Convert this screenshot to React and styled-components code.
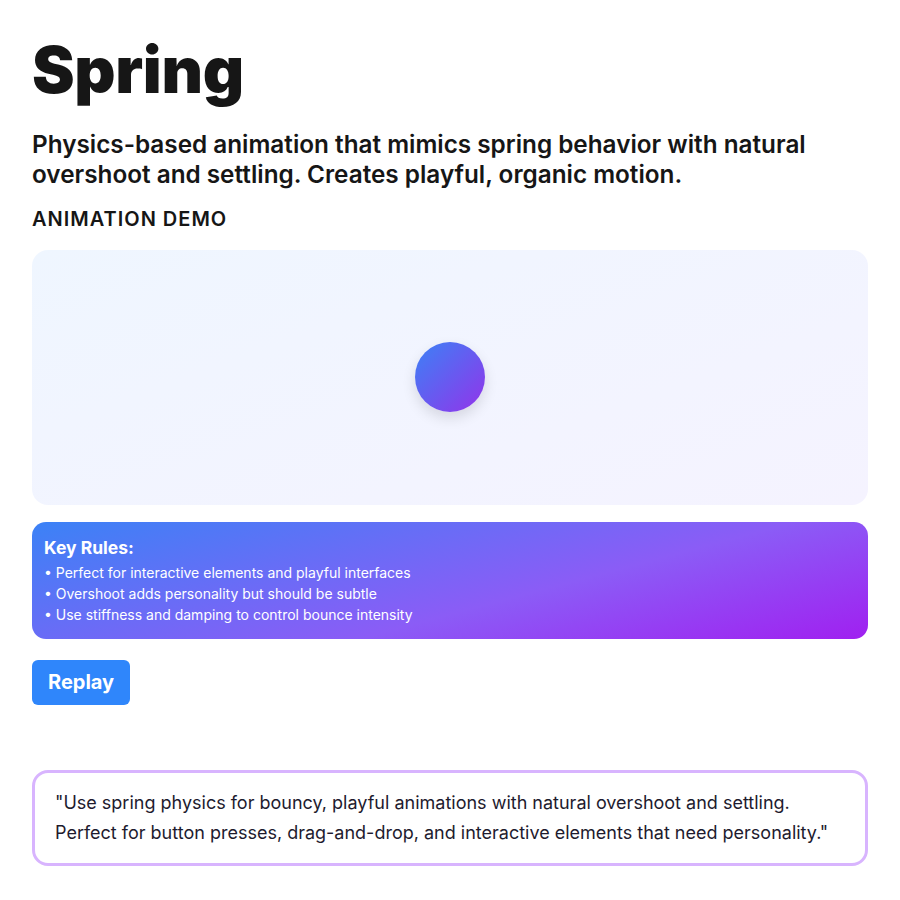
import React from 'react'
import styled, { createGlobalStyle } from 'styled-components';

const Global = createGlobalStyle`
body{
  margin:0;
  background:#fff;
  font-family:Inter, "Noto Sans", sans-serif;
  color:#111;
}
`;

const Page = styled.div`
padding:32px 32px;
display:flex;
flex-direction:column;
`;

const Title = styled.h1`
margin:0;
font-size:64px;
font-weight:900;
line-height:1.2;
letter-spacing:-0.3px;
color:#161616;
`;

const Lead = styled.p`
margin:20px 0 0;
font-size:24.3px;
font-weight:600;
line-height:30px;
color:#161616;
`;

const Label = styled.h3`
margin:18px 0 0;
font-size:20px;
font-weight:600;
line-height:24px;
letter-spacing:1px;
text-transform:uppercase;
color:#161616;
`;

const Stage = styled.div`
margin-top:19px;
height:255px;
border-radius:16px;
background:linear-gradient(160deg, #eff6ff 0%, #f5f3ff 100%);
display:flex;
align-items:center;
justify-content:center;
`;

const Ball = styled.div`
width:70px;
height:70px;
border-radius:50%;
background:linear-gradient(135deg, #3b82f6 0%, #9333ea 100%);
box-shadow:0 6px 14px rgba(0,0,0,0.12);
`;

const Rules = styled.div`
margin-top:17px;
padding:15px 12px 14px;
border-radius:14px;
color:#fff;
background:linear-gradient(165deg, #3b82f6 0%, #8b5cf6 60%, #a020f0 100%);
`;

const RulesTitle = styled.div`
font-size:17.5px;
font-weight:700;
line-height:22px;
margin-bottom:3px;
`;

const List = styled.ul`
margin:0;
padding:0;
list-style:none;
`;

const Item = styled.li`
font-size:14px;
line-height:21px;
&:before{
  content:"• ";
}
`;

const Button = styled.button`
margin-top:21px;
align-self:flex-start;
border:none;
border-radius:6px;
background:#2f86fb;
color:#fff;
font-family:inherit;
font-size:20px;
font-weight:700;
line-height:25px;
padding:10px 16px;
`;

const Quote = styled.div`
margin-top:65px;
border:3px solid #d8b4fe;
border-radius:16px;
padding:15px 20px;
font-size:18px;
line-height:30px;
color:#1e1b2e;
`;

const App = () => {
  return (
    <Page>
      <Global />
      <Title>Spring</Title>
      <Lead>Physics-based animation that mimics spring behavior with natural overshoot and settling. Creates playful, organic motion.</Lead>
      <Label>Animation Demo</Label>
      <Stage>
        <Ball />
      </Stage>
      <Rules>
        <RulesTitle>Key Rules:</RulesTitle>
        <List>
          <Item>Perfect for interactive elements and playful interfaces</Item>
          <Item>Overshoot adds personality but should be subtle</Item>
          <Item>Use stiffness and damping to control bounce intensity</Item>
        </List>
      </Rules>
      <Button>Replay</Button>
      <Quote>"Use spring physics for bouncy, playful animations with natural overshoot and settling. Perfect for button presses, drag-and-drop, and interactive elements that need personality."</Quote>
    </Page>
  )
}

export default App
